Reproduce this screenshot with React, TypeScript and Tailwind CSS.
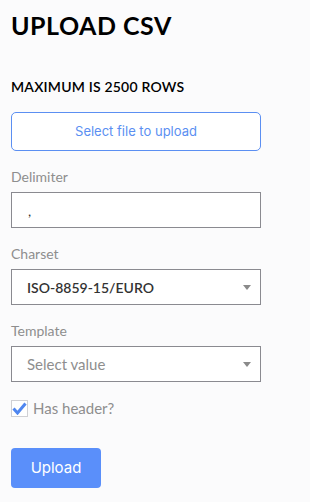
import { useState } from 'react';

export default function App() {
  const [hasHeader, setHasHeader] = useState(true);
  const [delimiter, setDelimiter] = useState(',');

  return (
    <div className="w-[310px] h-[502px] bg-[#fbfbfc] px-[11px] pt-[10px] text-[#222]" style={{ fontFamily: 'Lato, "Noto Sans", sans-serif' }}>
      <h1 className="text-[25px] font-bold leading-[30px] tracking-[0.5px] text-black">UPLOAD CSV</h1>

      <div className="mt-[39px] text-[14px] font-semibold leading-[16px] text-black tracking-[0.2px]">MAXIMUM IS 2500 ROWS</div>

      <button className="mt-[17px] w-[250px] h-[39px] border border-[#5b8ff2] rounded-[5px] bg-white text-[13px] text-[#5b8ff2]" style={{ fontFamily: 'Inter, sans-serif' }}>
        Select file to upload
      </button>

      <div className="mt-[18px] text-[14px] text-[#8e8e8e] leading-[16px]">Delimiter</div>
      <input
        value={delimiter}
        onChange={e => setDelimiter(e.target.value)}
        className="mt-[7px] block w-[250px] h-[36px] border border-[#8a8a90] bg-white px-[16px] text-[14px] text-[#333] outline-none"
      />

      <div className="mt-[18px] text-[14px] text-[#8e8e8e] leading-[16px]">Charset</div>
      <div className="mt-[7px] w-[250px] h-[36px] border border-[#8a8a90] bg-white pl-[15px] pr-[9px] flex items-center justify-between">
        <span className="text-[14px] font-semibold text-[#333]">ISO-8859-15/EURO</span>
        <span className="w-0 h-0 border-l-[4px] border-r-[4px] border-t-[5px] border-l-transparent border-r-transparent border-t-[#8a8a8a]" />
      </div>

      <div className="mt-[18px] text-[14px] text-[#8e8e8e] leading-[16px]">Template</div>
      <div className="mt-[7px] w-[250px] h-[36px] border border-[#8a8a90] bg-white pl-[15px] pr-[9px] flex items-center justify-between">
        <span className="text-[15px] text-[#8e8e8e]">Select value</span>
        <span className="w-0 h-0 border-l-[4px] border-r-[4px] border-t-[5px] border-l-transparent border-r-transparent border-t-[#8a8a8a]" />
      </div>

      <label className="mt-[18px] h-[17px] flex items-center gap-[5px] cursor-pointer leading-[17px]">
        <span
          onClick={() => setHasHeader(!hasHeader)}
          className="w-[17px] h-[17px] border border-[#d0d0d4] bg-white flex items-center justify-center"
        >
          {hasHeader && (
            <svg width="15" height="13" viewBox="0 0 15 13">
              <path d="M1.5 6.5 L5.5 11 L13.5 1.5" fill="none" stroke="#4f86f0" strokeWidth="3" strokeLinejoin="miter" />
            </svg>
          )}
        </span>
        <span className="text-[15px] text-[#8e8e8e]">Has header?</span>
      </label>

      <button className="mt-[31px] w-[90px] h-[40px] rounded-[4px] bg-[#5a8ffa] text-white text-[15px]" style={{ fontFamily: 'Inter, sans-serif' }}>
        Upload
      </button>
    </div>
  );
}
